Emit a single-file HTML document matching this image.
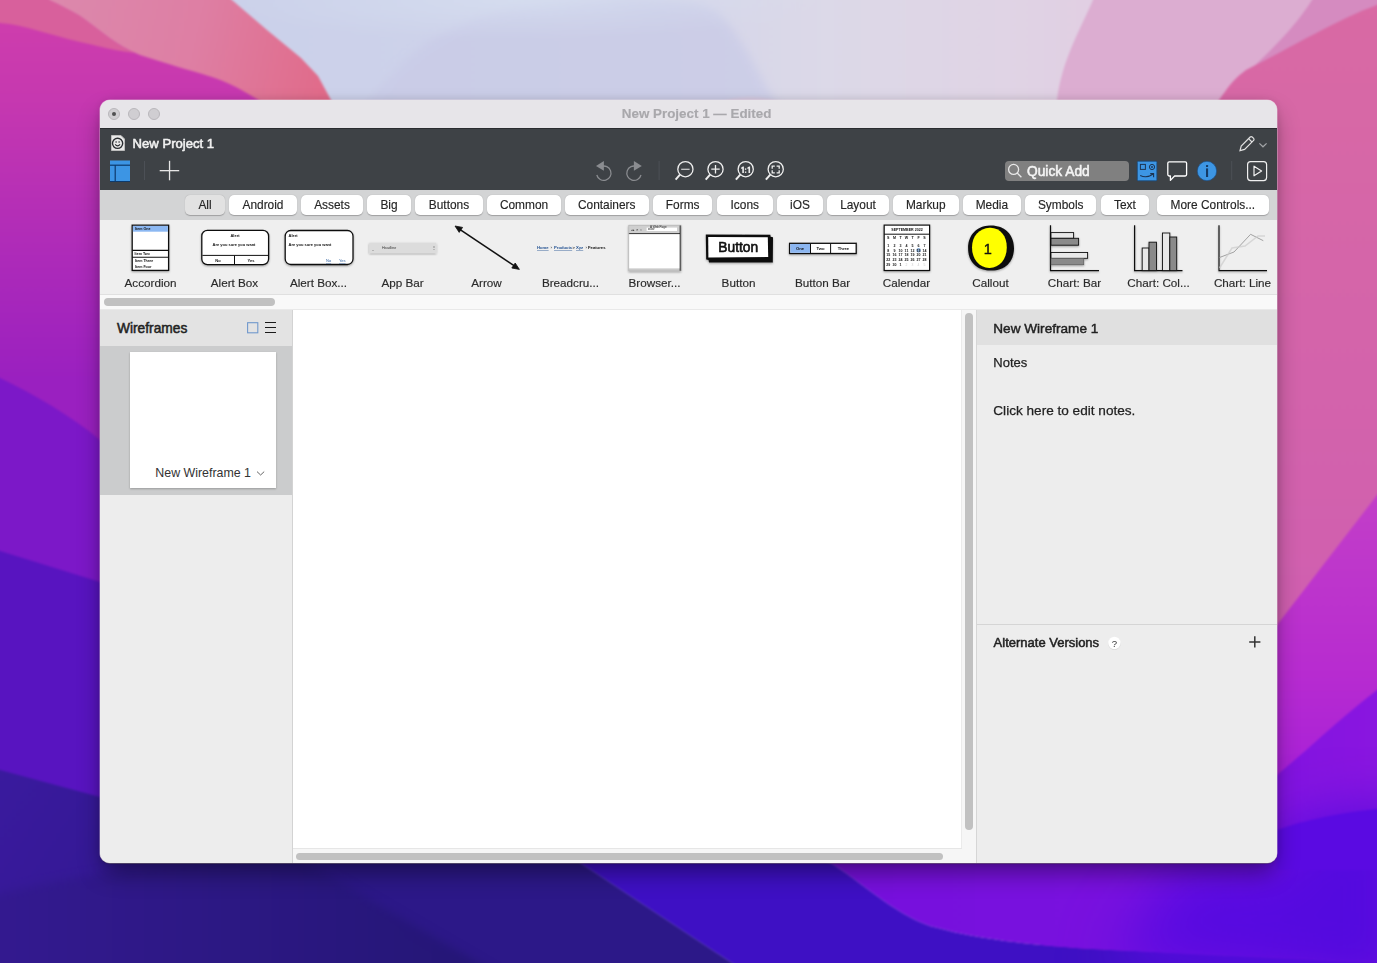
<!DOCTYPE html>
<html><head><meta charset="utf-8">
<style>
*{box-sizing:border-box;margin:0;padding:0}
html,body{width:1377px;height:963px;overflow:hidden;font-family:"Liberation Sans",sans-serif}
body{position:relative;background:#5a18c0}
#wp{position:absolute;left:0;top:0;width:1377px;height:963px}
.abs{position:absolute}
#win{position:absolute;left:100px;top:100px;width:1177px;height:763px;border-radius:10px;overflow:hidden;background:#ededed;box-shadow:0 0 0 0.6px rgba(255,235,250,.5),0 1px 1px rgba(0,0,0,.45),0 12px 24px -3px rgba(0,0,0,.42),0 0 10px rgba(0,0,0,.12)}
#titlebar{position:absolute;left:0;top:0;width:1177px;height:28px;background:#e7e5e9}
.tl{position:absolute;top:8px;width:12px;height:12px;border-radius:50%;background:#d0ced2;border:1px solid #b9b7bb}
#title{position:absolute;left:521.8px;top:6.2px;height:16px;line-height:16px;white-space:nowrap;font-weight:bold;font-size:13.4px;color:#a9a8ac;-webkit-text-stroke:0.15px #a9a8ac}
#toolbar{position:absolute;left:0;top:28px;width:1177px;height:62px;background:#3e4246;border-top:1px solid #2a2c30}
#filter{position:absolute;left:0;top:90px;width:1177px;height:30px;background:#d3d4d5}
.pill{position:absolute;top:5px;height:20px;border-radius:5px;background:#fff;font-size:11.9px;line-height:20px;text-align:center;color:#262626;-webkit-text-stroke:0.15px #262626;box-shadow:0 0.5px 1px rgba(0,0,0,.25)}
#strip{position:absolute;left:0;top:120px;width:1177px;height:74px;background:#efefef}
#hscroll1{position:absolute;left:0;top:194px;width:1177px;height:16px;background:#f9f9f9;border-top:1px solid #e0e0e0;border-bottom:1.5px solid #e9e9e9}
.lbl{position:absolute;top:175.6px;line-height:14px;width:84px;text-align:center;font-size:11.7px;color:#2a2a2a;-webkit-text-stroke:0.15px #2a2a2a;white-space:nowrap}
#left{position:absolute;left:0;top:210px;width:193px;height:553px;background:#ededed;border-right:1px solid #d3d3d3}
#canvas{position:absolute;left:193px;top:210px;width:669px;height:538px;background:#fff;border-right:1px solid #ebebeb}
#right{position:absolute;left:876px;top:210px;width:301px;height:553px;background:#ededed;border-left:1px solid #d6d6d6}
</style></head><body>
<svg id="wp" width="1377" height="963" viewBox="0 0 1377 963"><defs>
<linearGradient id="gLav" gradientUnits="userSpaceOnUse" x1="0" y1="0" x2="1377" y2="0">
<stop offset="0" stop-color="#c8cfea"/><stop offset="0.3" stop-color="#cdd2ea"/><stop offset="0.47" stop-color="#d3d5ea"/><stop offset="0.6" stop-color="#dcd9e8"/><stop offset="0.73" stop-color="#e0d4e5"/><stop offset="0.79" stop-color="#e1cfe3"/></linearGradient>
<linearGradient id="gCoral" gradientUnits="userSpaceOnUse" x1="60" y1="0" x2="330" y2="60">
<stop offset="0" stop-color="#dc88ac"/><stop offset="0.5" stop-color="#de7fa4"/><stop offset="1" stop-color="#e16b8a"/></linearGradient>
<linearGradient id="gMag" gradientUnits="userSpaceOnUse" x1="0" y1="0" x2="0" y2="400">
<stop offset="0" stop-color="#d03fac"/><stop offset="0.25" stop-color="#c638b0"/><stop offset="0.6" stop-color="#b02cb8"/><stop offset="0.95" stop-color="#9a20c0"/></linearGradient>
<linearGradient id="gHot" gradientUnits="userSpaceOnUse" x1="0" y1="0" x2="0" y2="620">
<stop offset="0" stop-color="#d96aa4"/><stop offset="1" stop-color="#d05fb0"/></linearGradient>
<linearGradient id="gRMag" gradientUnits="userSpaceOnUse" x1="0" y1="500" x2="0" y2="780">
<stop offset="0" stop-color="#c23ec8"/><stop offset="0.6" stop-color="#b82cd0"/><stop offset="1" stop-color="#a820d8"/></linearGradient>
<linearGradient id="gInd" gradientUnits="userSpaceOnUse" x1="0" y1="770" x2="300" y2="963">
<stop offset="0" stop-color="#3a1a9e"/><stop offset="1" stop-color="#2c1888"/></linearGradient>
<linearGradient id="gInd2" gradientUnits="userSpaceOnUse" x1="0" y1="0" x2="480" y2="0">
<stop offset="0" stop-color="#33198f"/><stop offset="1" stop-color="#241676"/></linearGradient>
<linearGradient id="gPur" gradientUnits="userSpaceOnUse" x1="830" y1="0" x2="1377" y2="0">
<stop offset="0" stop-color="#7610dc"/><stop offset="0.6" stop-color="#7a12e0"/><stop offset="1" stop-color="#8a16e0"/></linearGradient>
<linearGradient id="gBV" gradientUnits="userSpaceOnUse" x1="1100" y1="820" x2="1377" y2="963"><stop offset="0" stop-color="#5c0ae2"/><stop offset="1" stop-color="#520ade"/></linearGradient><radialGradient id="gTopL"><stop offset="0" stop-color="#d8e2f2" stop-opacity="0.6"/><stop offset="1" stop-color="#d8e2f2" stop-opacity="0"/></radialGradient>
<filter id="bl14" color-interpolation-filters="sRGB" x="-30%" y="-30%" width="160%" height="160%"><feGaussianBlur stdDeviation="28"/></filter>
<filter id="bl8" color-interpolation-filters="sRGB" x="-20%" y="-20%" width="140%" height="140%"><feGaussianBlur stdDeviation="5"/></filter>
<filter id="bl" color-interpolation-filters="sRGB" x="-5%" y="-5%" width="110%" height="110%"><feGaussianBlur stdDeviation="1.2"/></filter>
</defs>
<g filter="url(#bl)">
<rect x="-30" y="-30" width="1440" height="1030" fill="url(#gLav)"/>
<path d="M360,110 C400,60 440,20 520,8 C600,0 680,-5 715,10 C740,30 755,70 780,110 Z" fill="#c9cbe7" opacity="0.75" filter="url(#bl8)"/>
<ellipse cx="520" cy="0" rx="300" ry="40" fill="url(#gTopL)"/>
<path d="M700,110 C730,95 760,90 800,110 Z" fill="#dccae0" opacity="0.6"/>
<path d="M1097,-30 L1093,0 C1080,30 1062,60 1057,100 L1000,1000 L1410,1000 L1410,-30 Z" fill="#dcadd1"/>
<path d="M1330,-30 L1312,0 C1290,35 1260,60 1219,100 L1100,1000 L1410,1000 L1410,-30 Z" fill="#d58bc0"/>
<path d="M1410,-5 L1377,5 C1340,18 1290,48 1246,70 C1232,80 1225,92 1219,100 L1100,1000 L1410,1000 Z" fill="url(#gHot)"/>
<path d="M1410,452 L1377,495 L1277,625 L1000,1000 L1410,1000 Z" fill="url(#gRMag)"/>
<path d="M200,-30 L232,0 L267,30 L301,58 L318,76 L331,100 L600,500 L-30,500 L-30,-30 Z" fill="url(#gCoral)"/>
<path d="M40,-30 L49,0 C60,5 70,10 80,16 C100,30 115,45 140,55 C170,65 190,70 215,78 C235,85 250,95 262,102 L500,600 L-30,600 L-30,-30 Z" fill="url(#gMag)"/>
<path d="M-30,-30 L40,-30 L49,0 C60,5 70,10 80,16 C100,30 115,45 135,53 C110,50 95,45 80,42 C50,35 25,25 0,23 L-30,20 Z" fill="#d8609c"/>

<path d="M-30,360 L0,378 C35,395 70,415 100,440 L400,700 L-30,1000 Z" fill="#7c18c8"/>
<path d="M-30,542 L0,551 L100,582 L400,800 L-30,1000 Z" fill="#5814c0"/>
<path d="M-30,760 L0,770 L100,797 L200,840 L305,862 L579,862 L732,963 L788,1000 L-30,1000 Z" fill="url(#gInd)"/>
<path d="M-30,900 C60,880 200,850 305,862 L479,963 L543,1000 L-30,1000 Z" fill="url(#gInd2)" filter="url(#bl8)"/>
<path d="M579,862 L700,830 L829,862 C860,880 900,920 938,928 C980,940 1050,948 1135,951 L1410,965 L1410,1000 L788,1000 Z" fill="#3e10c4"/>
<path d="M1410,665 L1377,690 C1340,718 1310,748 1277,775 C1150,830 900,850 829,862 C860,880 900,920 938,928 C980,940 1050,948 1135,951 L1410,963 Z" fill="url(#gPur)"/>
<path d="M1410,806 L1377,809 C1330,814 1300,822 1277,830 L1277,862 L1180,862 L1110,963 L1410,1000 Z" fill="url(#gBV)" filter="url(#bl14)"/>
<path d="M1410,806 L1377,809 C1330,814 1300,822 1277,830 L1277,870 L1410,870 Z" fill="#5a0ae2"/>
</g>
</svg>
<div id="win">
  <div id="titlebar">
    <div class="tl" style="left:8px"><div style="position:absolute;left:3px;top:3px;width:4px;height:4px;border-radius:50%;background:#505052"></div></div>
    <div class="tl" style="left:28px"></div>
    <div class="tl" style="left:48px"></div>
    <div id="title">New Project 1 — Edited</div>
  </div>
  <div id="toolbar">
    <svg class="abs" style="left:0;top:-1px" width="1177" height="62" viewBox="0 28 1177 62">
      <!-- logo -->
      <path d="M11.5,35.5 H21 L24.5,39 V50.5 H11.5 Z" fill="#e9e9e9" stroke="#bdbdbd" stroke-width="1"/>
      <circle cx="17.6" cy="43.3" r="5.1" fill="none" stroke="#2a2d31" stroke-width="1.4"/>
      <path d="M15.2,44.3 Q17.6,47.4 20,44.3" fill="none" stroke="#2a2d31" stroke-width="1.2"/>
      <circle cx="16.1" cy="42" r="0.8" fill="#2a2d31"/><circle cx="19.1" cy="42" r="0.8" fill="#2a2d31"/>
      <!-- layout icon -->
      <rect x="10" y="60.5" width="20" height="21" fill="#3c95e4"/>
      <rect x="10" y="64.6" width="20" height="1.2" fill="#0d3a6c"/>
      <rect x="14.6" y="65" width="1.2" height="16.5" fill="#0d3a6c"/>
      <rect x="10" y="81" width="20" height="1" fill="#0d3a6c"/>
      <rect x="44" y="61" width="1" height="19" fill="#4c5056"/>
      <!-- plus -->
      <rect x="59.7" y="70" width="19.5" height="1.3" fill="#e6e6e6"/>
      <rect x="68.9" y="60.8" width="1.3" height="19.5" fill="#e6e6e6"/>
      <!-- undo/redo -->
      <g fill="none" stroke="#8a8c90" stroke-width="1.3">
        <path d="M501.2,66.5 A7.2,7.2 0 1 1 496.8,75"/>
        <path d="M536.6,66.5 A7.2,7.2 0 1 0 541,75"/>
      </g>
      <path d="M496,65.9 L503.9,61 V70.8 Z" fill="#8a8c90"/>
      <path d="M541.8,65.9 L533.9,61 V70.8 Z" fill="#8a8c90"/>
      <rect x="558.6" y="61" width="1" height="19" fill="#4c5056"/>
      <!-- zoom icons -->
      <g fill="none" stroke="#eeeeee" stroke-width="1.3">
        <circle cx="585.4" cy="69.2" r="7.6"/><path d="M580,74.6 L575.6,79.6" stroke-width="2"/>
        <path d="M581.2,69.2 H589.6" stroke-width="1.1"/>
        <circle cx="615.5" cy="69.2" r="7.6"/><path d="M610.1,74.6 L605.7,79.6" stroke-width="2"/>
        <path d="M611.3,69.2 H619.7 M615.5,65 V73.4"/>
        <circle cx="645.7" cy="69.2" r="7.6"/><path d="M640.3,74.6 L635.9,79.6" stroke-width="2"/>
        <circle cx="675.7" cy="69.2" r="7.6"/><path d="M670.3,74.6 L665.9,79.6" stroke-width="2"/>
        <path d="M672.2,68.7 V66.1 H674.8 M676.6,66.1 H679.2 V68.7 M679.2,70.3 V72.9 H676.6 M674.8,72.9 H672.2 V70.3" stroke-linecap="butt" stroke-linejoin="miter"/>
      </g>
      <path d="M641.2,67.4 L642.9,66.4 H643.9 V73 H642.3 V68.4 L641.2,69 Z M647.4,67.4 L649.1,66.4 H650.1 V73 H648.5 V68.4 L647.4,69 Z" fill="#eeeeee"/><rect x="644.9" y="68.4" width="1.4" height="1.4" fill="#eeeeee"/><rect x="644.9" y="71.5" width="1.4" height="1.4" fill="#eeeeee"/>
      <!-- pencil -->
      <g fill="none" stroke="#e0e0e0" stroke-width="1.2">
        <path d="M1140,50.6 L1141.2,46 L1150.2,37 A1.4,1.4 0 0 1 1152.2,37 L1153.6,38.4 A1.4,1.4 0 0 1 1153.6,40.4 L1144.6,49.4 Z"/>
        <path d="M1148.6,38.6 L1152,42"/>
        <path d="M1159.4,43.4 L1163,46.8 L1166.6,43.4" stroke="#a0a2a5"/>
      </g>
      <!-- quick add -->
      <rect x="905" y="61" width="124" height="20" rx="4" fill="#808080"/>
      <g fill="none" stroke="#e8e8e8" stroke-width="1.3"><circle cx="913.6" cy="69.4" r="5"/><path d="M917.2,73 L921.4,77.2"/></g>
      <text x="927" y="76" font-family="Liberation Sans" font-size="13.75" fill="#f4f4f4" stroke="#f4f4f4" stroke-width="0.55">Quick Add</text>
      <!-- blue ui icon -->
      <rect x="1037.3" y="61.2" width="19.6" height="19.6" rx="1" fill="#3d96e4" stroke="#174a7e" stroke-width="0.8"/>
      <g fill="none" stroke="#1d3553" stroke-width="1">
        <rect x="1040.4" y="64.4" width="5" height="5"/>
        <circle cx="1052" cy="67" r="2.6"/>
        <path d="M1040.2,75.4 Q1046.6,78.6 1053.4,74 M1050.2,73.6 H1053.6 V77.2" stroke-width="1.1"/>
      </g>
      <circle cx="1052" cy="67" r="0.9" fill="#1d3553"/>
      <!-- chat -->
      <path d="M1069.2,61.8 H1085.2 Q1086.6,61.8 1086.6,63.2 V74.6 Q1086.6,76 1085.2,76 H1074.6 L1070.4,80.4 V76 H1069.2 Q1067.8,76 1067.8,74.6 V63.2 Q1067.8,61.8 1069.2,61.8 Z" fill="none" stroke="#ffffff" stroke-width="1.3" stroke-linejoin="round"/>
      <!-- info -->
      <circle cx="1106.95" cy="71" r="9.7" fill="#3d96e4" stroke="#1d5088" stroke-width="0.7"/>
      <rect x="1106" y="68.4" width="2.1" height="8.6" fill="#143a66"/>
      <rect x="1106" y="64.9" width="2.1" height="2.2" rx="0.6" fill="#143a66"/>
      <rect x="1131.2" y="61" width="1" height="19" fill="#4c5056"/>
      <!-- play -->
      <rect x="1147.6" y="61.6" width="19" height="19" rx="3" fill="none" stroke="#f0f0f0" stroke-width="1.2"/>
      <path d="M1154,66.2 L1161.6,71 L1154,75.8 Z" fill="none" stroke="#f0f0f0" stroke-width="1.2" stroke-linejoin="round"/>
    </svg>
    <div class="abs" style="left:32.6px;top:6.6px;font-size:13.1px;color:#f2f2f2;-webkit-text-stroke:0.55px #f2f2f2;line-height:16px">New Project 1</div>
  </div>
  <div id="filter"><div class="pill" style="left:85px;width:40px;background:#e2e2e2">All</div><div class="pill" style="left:129px;width:68px">Android</div><div class="pill" style="left:201px;width:62px">Assets</div><div class="pill" style="left:267px;width:44px">Big</div><div class="pill" style="left:315px;width:68px">Buttons</div><div class="pill" style="left:387px;width:74px">Common</div><div class="pill" style="left:465px;width:83.5px">Containers</div><div class="pill" style="left:553px;width:59.39999999999998px">Forms</div><div class="pill" style="left:617px;width:55.5px">Icons</div><div class="pill" style="left:677px;width:46px">iOS</div><div class="pill" style="left:727px;width:62px">Layout</div><div class="pill" style="left:793px;width:65.5px">Markup</div><div class="pill" style="left:863px;width:57.700000000000045px">Media</div><div class="pill" style="left:925px;width:71.39999999999998px">Symbols</div><div class="pill" style="left:1001px;width:47.799999999999955px">Text</div><div class="pill" style="left:1057px;width:111.70000000000005px">More Controls...</div></div>
  <div id="strip"><svg class="abs" style="left:0;top:0" width="1177" height="75" viewBox="100 220 1177 75" font-family="Liberation Sans">
<defs><filter id="sh" x="-20%" y="-20%" width="140%" height="160%"><feGaussianBlur in="SourceAlpha" stdDeviation="0.9"/><feOffset dy="1.2"/><feComponentTransfer><feFuncA type="linear" slope="0.35"/></feComponentTransfer><feMerge><feMergeNode/><feMergeNode in="SourceGraphic"/></feMerge></filter></defs>
<!-- Accordion -->
<g filter="url(#sh)">
<rect x="132.2" y="225.2" width="36.4" height="45.2" fill="#fff" stroke="#111" stroke-width="1.3"/>
<rect x="132.9" y="225.9" width="35" height="5.8" fill="#8cb8f2"/>
<path d="M132.2,250.4 H168.6 M132.2,257.3 H168.6" stroke="#111" stroke-width="1.1"/>
</g>
<g font-size="3.6" font-weight="bold" fill="#111"><text x="135" y="230">Item One</text><text x="134.5" y="255">Item Two</text><text x="135" y="261.8">Item Three</text><text x="135" y="268">Item Four</text></g>
<!-- Alert Box -->
<g filter="url(#sh)">
<rect x="201.8" y="230.4" width="66.8" height="34.2" rx="5.6" fill="#fff" stroke="#111" stroke-width="1.3"/>
<path d="M202.4,255.4 H268 M234.5,255.4 V264.2" stroke="#111" stroke-width="1"/>
</g>
<g font-size="4" font-weight="bold" fill="#111" text-anchor="middle"><text x="235" y="237">Alert</text><text x="234" y="246">Are you sure you want</text><text x="218" y="262">No</text><text x="251" y="262">Yes</text></g>
<!-- Alert Box... -->
<g filter="url(#sh)">
<rect x="285.2" y="230.5" width="67.8" height="34" rx="5.6" fill="#fff" stroke="#111" stroke-width="1.3"/>
</g>
<g font-size="4" font-weight="bold" fill="#111"><text x="288.5" y="237">Alert</text><text x="288.5" y="246">Are you sure you want</text></g>
<g font-size="4" fill="#2e5f9e" text-decoration="underline"><text x="326" y="262.4">No</text><text x="339" y="262.4">Yes</text></g>
<!-- App Bar -->
<g filter="url(#sh)"><rect x="369.2" y="242.7" width="67.1" height="10.4" fill="#dcdcdc"/></g>
<g font-size="3.6" fill="#333"><text x="372" y="249.6">_</text><text x="382" y="249">Headline</text><text x="431.5" y="249">⋮</text></g>
<!-- Arrow -->
<path d="M457.5,227.8 L517,267.6" stroke="#111" stroke-width="1.6"/>
<path d="M455,226 L462.6,227.4 L459.2,232.4 Z M519.4,269.4 L511.8,268 L515.2,263 Z" fill="#111" stroke="#111" stroke-width="0.8" stroke-linejoin="round"/>
<!-- Breadcrumbs -->
<g font-size="4.2" font-weight="bold">
<text x="537" y="249.4" fill="#1f4f90" text-decoration="underline">Home</text>
<text x="550.4" y="249.4" fill="#333">›</text>
<text x="554" y="249.4" fill="#1f4f90" text-decoration="underline">Products</text>
<text x="572.6" y="249.4" fill="#333">&gt;</text>
<text x="576" y="249.4" fill="#1f4f90" text-decoration="underline">Xyz</text>
<text x="585.4" y="249.4" fill="#333">›</text>
<text x="588" y="249.4" fill="#111">Features</text>
</g>
<!-- Browser -->
<g filter="url(#sh)">
<rect x="628.8" y="225.2" width="52" height="45.8" fill="#fff"/>
<rect x="628.8" y="225.2" width="52" height="8.6" fill="#cfcfcf"/>
<rect x="646.6" y="227.6" width="30.4" height="3.4" fill="#fff"/>
<rect x="628.8" y="268.4" width="52" height="2.6" fill="#c9c9c9"/>
<path d="M628.8,233.6 H680.8" stroke="#222" stroke-width="0.9"/>
<path d="M680.4,225.2 V271" stroke="#111" stroke-width="1.4"/>
<rect x="628.8" y="225.2" width="52" height="45.8" fill="none" stroke="#aaa" stroke-width="0.6"/>
</g>
<g font-size="3" fill="#222"><text x="630.5" y="230.6">◂ ▸ ✕ ⌂</text><text x="648" y="230.4">www</text><text x="650" y="228">A Web Page</text></g>
<!-- Button -->
<g filter="url(#sh)">
<path d="M705.8,234.4 L770.4,234.8 L770.6,236.8 L773,237.2 L772.8,262.4 L709,262.6 L708.6,260 L706.2,259.6 Z" fill="#111"/>
<path d="M708.2,236.9 L767.8,237.2 L768.2,257 L708.4,257.4 Z" fill="#fff"/>
</g>
<text x="738.2" y="252.4" text-anchor="middle" font-size="13.8" fill="#111" stroke="#111" stroke-width="0.6">Button</text>
<!-- Button Bar -->
<g filter="url(#sh)">
<rect x="789.6" y="243.3" width="66.6" height="10.2" fill="#fff" stroke="#111" stroke-width="1.3"/>
<rect x="790.3" y="244" width="20" height="8.8" fill="#8cb6f0"/>
<path d="M810.5,243.3 V253.5 M830.6,243.3 V253.5" stroke="#111" stroke-width="1"/>
</g>
<g font-size="4.2" font-weight="bold" fill="#111" text-anchor="middle"><text x="800" y="250">One</text><text x="820.5" y="250">Two</text><text x="843.5" y="250">Three</text></g>
<!-- Calendar -->
<g filter="url(#sh)">
<rect x="884.2" y="225.1" width="45.4" height="45.4" fill="#fff" stroke="#111" stroke-width="1.2"/>
<path d="M884.2,234.2 H929.6" stroke="#111" stroke-width="1"/>
</g>
<g font-size="3.6" font-weight="bold" fill="#111" text-anchor="middle">
<text x="907" y="231">SEPTEMBER 2022</text>
<text x="888.2" y="239">S</text><text x="894.5" y="239">M</text><text x="900.5" y="239">T</text><text x="906.5" y="239">W</text><text x="912.5" y="239">T</text><text x="918.5" y="239">F</text><text x="924.5" y="239">S</text>
<text x="888.2" y="247">1</text><text x="894.5" y="247">2</text><text x="900.5" y="247">3</text><text x="906.5" y="247">4</text><text x="912.5" y="247">5</text><text x="918.5" y="247">6</text><text x="924.5" y="247">7</text>
<circle cx="918.6" cy="250.2" r="2.2" fill="#8aaed8"/>
<text x="888.2" y="251.5">8</text><text x="894.5" y="251.5">9</text><text x="900.5" y="251.5">10</text><text x="906.5" y="251.5">11</text><text x="912.5" y="251.5">12</text><text x="918.5" y="251.5">13</text><text x="924.5" y="251.5">14</text>
<text x="888.2" y="256">15</text><text x="894.5" y="256">16</text><text x="900.5" y="256">17</text><text x="906.5" y="256">18</text><text x="912.5" y="256">19</text><text x="918.5" y="256">20</text><text x="924.5" y="256">21</text>
<text x="888.2" y="260.8">22</text><text x="894.5" y="260.8">23</text><text x="900.5" y="260.8">24</text><text x="906.5" y="260.8">25</text><text x="912.5" y="260.8">26</text><text x="918.5" y="260.8">27</text><text x="924.5" y="260.8">28</text>
<text x="888.2" y="265.6">29</text><text x="894.5" y="265.6">30</text><text x="900.5" y="265.6">1</text>
</g>
<g font-size="3.4" fill="#ccc" text-anchor="middle"><text x="906.5" y="265.6">2</text><text x="912.5" y="265.6">3</text><text x="918.5" y="265.6">4</text><text x="924.5" y="265.6">5</text></g>
<!-- Callout -->
<g filter="url(#sh)">
<path d="M990,225.4 C1004,225 1014.2,234 1014,248.4 C1013.8,262 1005,270.8 990.5,270.6 C976,270.4 968,261 968.1,248 C968.2,234.5 977,225.8 990,225.4 Z" fill="#111"/>
<path d="M989.6,227.8 C1000,227.4 1007,236 1006.8,247.8 C1006.6,259.6 999.5,267.8 989.6,268 C979.5,268.2 972,259.4 972,247.6 C972,236 979.4,228.2 989.6,227.8 Z" fill="#ffff00"/>
</g>
<text x="987.8" y="254.4" text-anchor="middle" font-size="14.5" fill="#111" stroke="#111" stroke-width="0.4">1</text>
<!-- Chart: Bar -->
<g filter="url(#sh)">
<path d="M1050.5,225.3 V270.6 H1099" fill="none" stroke="#111" stroke-width="1.2"/>
<rect x="1051" y="232.6" width="22.6" height="5.7" fill="#e8e8e8" stroke="#111" stroke-width="0.9"/>
<rect x="1051" y="238.3" width="27.6" height="6.9" fill="#8a8a8a" stroke="#111" stroke-width="0.9"/>
<rect x="1051" y="252.5" width="36.6" height="5.8" fill="#e8e8e8" stroke="#111" stroke-width="0.9"/>
<rect x="1051" y="258.3" width="32.8" height="6.5" fill="#8a8a8a" stroke="#555" stroke-width="0.6"/>
</g>
<!-- Chart: Col -->
<g filter="url(#sh)">
<path d="M1134.6,225.3 V270.6 H1182.5" fill="none" stroke="#111" stroke-width="1.2"/>
<rect x="1142.2" y="248" width="6.8" height="22.6" fill="#e8e8e8" stroke="#111" stroke-width="0.9"/>
<rect x="1149" y="242.2" width="7.5" height="28.4" fill="#8a8a8a" stroke="#111" stroke-width="0.9"/>
<rect x="1162.5" y="233" width="7.3" height="37.6" fill="#e8e8e8" stroke="#111" stroke-width="0.9"/>
<rect x="1169.8" y="237" width="6.9" height="33.6" fill="#8a8a8a" stroke="#111" stroke-width="0.9"/>
</g>
<!-- Chart: Line -->
<g filter="url(#sh)">
<path d="M1219,225.3 V270.6 H1267" fill="none" stroke="#111" stroke-width="1.2"/>
</g>
<path d="M1219.5,257.5 L1234,252 L1250.6,234.3 L1263.3,240.7" fill="none" stroke="#999" stroke-width="0.9"/>
<path d="M1219.5,268 L1232,248 L1245,246 L1258,236 L1265,236" fill="none" stroke="#ccc" stroke-width="1.5" opacity="0.7"/>
</svg>
</div>
<div class="lbl" style="left:8.5px">Accordion</div><div class="lbl" style="left:92.5px">Alert Box</div><div class="lbl" style="left:176.5px">Alert Box...</div><div class="lbl" style="left:260.5px">App Bar</div><div class="lbl" style="left:344.5px">Arrow</div><div class="lbl" style="left:428.5px">Breadcru...</div><div class="lbl" style="left:512.5px">Browser...</div><div class="lbl" style="left:596.5px">Button</div><div class="lbl" style="left:680.5px">Button Bar</div><div class="lbl" style="left:764.5px">Calendar</div><div class="lbl" style="left:848.5px">Callout</div><div class="lbl" style="left:932.5px">Chart: Bar</div><div class="lbl" style="left:1016.5px">Chart: Col...</div><div class="lbl" style="left:1100.5px">Chart: Line</div>
  <div id="hscroll1"><div class="abs" style="left:4px;top:3px;width:171px;height:8px;border-radius:4px;background:#c1c1c1"></div></div>
  <div id="left">
    <div class="abs" style="left:0;top:0;width:192px;height:36px;background:#e3e3e3"></div>
    <div class="abs" style="left:0;top:36px;width:192px;height:148.5px;background:#cbcccd"></div>
    <div class="abs" style="left:17px;top:11px;font-size:13.75px;color:#222;-webkit-text-stroke:0.5px #222;line-height:16px">Wireframes</div>
    <svg class="abs" style="left:140px;top:8px" width="50" height="20">
      <rect x="7.6" y="4.7" width="10.2" height="10.1" fill="none" stroke="#7098cc" stroke-width="1.1"/>
      <path d="M25,4.5 H36 M25,9.5 H36 M25,14.5 H36" stroke="#1a1a1a" stroke-width="1.1"/>
    </svg>
    <div class="abs" style="left:30px;top:42px;width:146px;height:136px;background:#fff;box-shadow:0 0.5px 2px rgba(0,0,0,.25)">
      <div class="abs" style="left:25.3px;top:113px;font-size:12.4px;color:#333;line-height:16px;white-space:nowrap">New Wireframe 1</div>
      <svg class="abs" style="left:126px;top:118px" width="12" height="8"><path d="M1,1.6 L4.6,5 L8.2,1.6" fill="none" stroke="#666" stroke-width="1"/></svg>
    </div>
  </div>
  <div id="canvas"></div>
  <div id="vscroll" class="abs" style="left:862px;top:210px;width:14px;height:553px;background:#f6f6f6">
    <div class="abs" style="left:3.4px;top:2.8px;width:7.6px;height:517px;border-radius:4px;background:#c1c1c1"></div>
  </div>
  <div id="hscroll2" class="abs" style="left:193px;top:748px;width:669px;height:15px;background:#f6f6f6;border-top:1px solid #e6e6e6">
    <div class="abs" style="left:3px;top:3.5px;width:646.5px;height:7.5px;border-radius:4px;background:#c1c1c1"></div>
  </div>
  <div id="right">
    <div class="abs" style="left:0;top:0;width:300px;height:35px;background:#e0e0e0"></div>
    <div class="abs" style="left:16.3px;top:11px;font-size:13.6px;color:#222;-webkit-text-stroke:0.45px #222;line-height:16px">New Wireframe 1</div>
    <div class="abs" style="left:16.3px;top:45px;font-size:13px;color:#222;-webkit-text-stroke:0.25px #222;line-height:16px">Notes</div><div class="abs" style="left:16.3px;top:93px;font-size:13.6px;color:#222;-webkit-text-stroke:0.25px #222;line-height:16px">Click here to edit notes.</div><div class="abs" style="left:16.6px;top:325px;font-size:13px;color:#222;-webkit-text-stroke:0.5px #222;line-height:16px">Alternate Versions</div><svg class="abs" style="left:120px;top:320px" width="180" height="24"><circle cx="17.4" cy="13.6" r="6.3" fill="#d6d6d6"/><circle cx="17.4" cy="13" r="6.2" fill="#fff"/><text x="17.4" y="16.6" text-anchor="middle" font-family="Liberation Sans" font-size="9.6" fill="#333">?</text><path d="M152.2,11.9 H163.4 M157.8,6.3 V17.5" stroke="#333" stroke-width="1.5"/></svg>
    <div class="abs" style="left:0;top:314px;width:300px;height:1px;background:#d5d5d5"></div>
  </div>
</div>
</body></html>
